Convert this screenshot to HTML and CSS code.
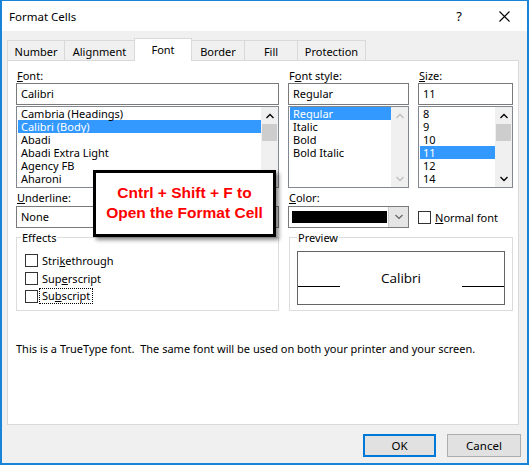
FILE: index.html
```html
<!DOCTYPE html>
<html>
<head>
<meta charset="utf-8">
<link rel="stylesheet" href="styles.css">
</head>
<body>
<div class="window">
  <div class="titlebar">
    <span class="title">Format Cells</span>
    <span class="cap help">?</span>
    <span class="cap close"><svg width="11" height="11" viewBox="0 0 11 11"><path d="M0.5 0.5L10.5 10.5M10.5 0.5L0.5 10.5" stroke="#000" stroke-width="1.1" fill="none"/></svg></span>
  </div>
  <div class="body">
    <div class="tabs">
      <div class="tab t-number">Number</div>
      <div class="tab t-align">Alignment</div>
      <div class="tab active t-font">Font</div>
      <div class="tab t-border">Border</div>
      <div class="tab t-fill">Fill</div>
      <div class="tab t-prot">Protection</div>
    </div>
    <div class="panel">
      <div class="grid">
        <div class="label c1"><u>F</u>ont:</div>
        <div class="label c2">F<u>o</u>nt style:</div>
        <div class="label c3"><u>S</u>ize:</div>

        <div class="input c1">Calibri</div>
        <div class="input c2">Regular</div>
        <div class="input c3">11</div>

        <div class="list c1">
          <div class="items">
            <div class="item">Cambria (Headings)</div>
            <div class="item sel">Calibri (Body)</div>
            <div class="item">Abadi</div>
            <div class="item">Abadi Extra Light</div>
            <div class="item">Agency FB</div>
            <div class="item">Aharoni</div>
          </div>
          <div class="scroll">
            <div class="arrow"><svg width="8" height="6" viewBox="0 0 8 6"><path d="M0.5 5L4 1.5L7.5 5" stroke="#000" stroke-width="1.3" fill="none"/></svg></div>
            <div class="thumb"></div>
            <div class="spacer"></div>
            <div class="arrow"><svg width="8" height="6" viewBox="0 0 8 6"><path d="M0.5 1L4 4.5L7.5 1" stroke="#000" stroke-width="1.3" fill="none"/></svg></div>
          </div>
        </div>
        <div class="list c2">
          <div class="items">
            <div class="item sel">Regular</div>
            <div class="item">Italic</div>
            <div class="item">Bold</div>
            <div class="item">Bold Italic</div>
          </div>
          <div class="scroll">
            <div class="arrow"><svg width="8" height="6" viewBox="0 0 8 6"><path d="M0.5 5L4 1.5L7.5 5" stroke="#bfbfbf" stroke-width="1.3" fill="none"/></svg></div>
            <div class="spacer"></div>
            <div class="arrow"><svg width="8" height="6" viewBox="0 0 8 6"><path d="M0.5 1L4 4.5L7.5 1" stroke="#bfbfbf" stroke-width="1.3" fill="none"/></svg></div>
          </div>
        </div>
        <div class="list c3">
          <div class="items">
            <div class="item">8</div>
            <div class="item">9</div>
            <div class="item">10</div>
            <div class="item sel">11</div>
            <div class="item">12</div>
            <div class="item">14</div>
          </div>
          <div class="scroll">
            <div class="arrow"><svg width="8" height="6" viewBox="0 0 8 6"><path d="M0.5 5L4 1.5L7.5 5" stroke="#000" stroke-width="1.3" fill="none"/></svg></div>
            <div class="thumb"></div>
            <div class="spacer"></div>
            <div class="arrow"><svg width="8" height="6" viewBox="0 0 8 6"><path d="M0.5 1L4 4.5L7.5 1" stroke="#000" stroke-width="1.3" fill="none"/></svg></div>
          </div>
        </div>

        <div class="label c1 lower"><u>U</u>nderline:</div>
        <div class="label c2 lower"><u>C</u>olor:</div>

        <div class="select c1">
          <span class="sel-text">None</span>
          <span class="dd"><svg width="8" height="6" viewBox="0 0 8 6"><path d="M0.5 1L4 4.5L7.5 1" stroke="#606060" stroke-width="1.1" fill="none"/></svg></span>
        </div>
        <div class="select c2">
          <span class="swatch"></span>
          <span class="dd"><svg width="8" height="6" viewBox="0 0 8 6"><path d="M0.5 1L4 4.5L7.5 1" stroke="#606060" stroke-width="1.1" fill="none"/></svg></span>
        </div>
        <div class="check c3 normal"><span class="box"></span><span><u>N</u>ormal font</span></div>

        <fieldset class="group c1 effects">
          <legend>Effects</legend>
          <div class="check"><span class="box"></span><span>Stri<u>k</u>ethrough</span></div>
          <div class="check"><span class="box"></span><span>Sup<u>e</u>rscript</span></div>
          <div class="check"><span class="box"></span><span class="focus">Su<u>b</u>script</span></div>
        </fieldset>
        <fieldset class="group preview">
          <legend>Preview</legend>
          <div class="pbox">
            <span class="pline"></span>
            <span class="ptext">Calibri</span>
            <span class="pline"></span>
          </div>
        </fieldset>
      </div>
      <p class="note">This is a TrueType font.&nbsp; The same font will be used on both your printer and your screen.</p>
    </div>
    <div class="buttons">
      <button class="btn ok">OK</button>
      <button class="btn cancel">Cancel</button>
    </div>
  </div>
  <div class="callout">Cntrl + Shift + F to<br>Open the Format Cell</div>
</div>
</body>
</html>
```

FILE: styles.css
```css
* { box-sizing: border-box; }
html, body { margin: 0; padding: 0; }
body {
  font-family: "Noto Sans", "Segoe UI", sans-serif;
  font-size: 11px;
  color: #000;
  background: #fff;
}
.window {
  position: relative;
  width: 529px;
  height: 465px;
  border: solid #1883d7;
  border-width: 1px 2px 2px 2px;
  display: flex;
  flex-direction: column;
  background: #f0f0f0;
}
.titlebar {
  height: 30px;
  flex: none;
  background: #fff;
  display: flex;
  align-items: center;
  padding-left: 7px;
  font-size: 11.5px;
}
.title { flex: 1; }
.cap {
  height: 30px;
  display: flex;
  align-items: center;
  justify-content: center;
}
.help { width: 46px; font-size: 13px; }
.close { width: 45px; }

.body {
  flex: 1;
  padding: 7px 6px 0 5px;
  display: flex;
  flex-direction: column;
}
.tabs {
  display: flex;
  align-items: flex-end;
  height: 22px;
  position: relative;
  z-index: 1;
}
.tab {
  height: 20px;
  border: 1px solid #d9d9d9;
  border-bottom: none;
  background: #f0f0f0;
  display: flex;
  align-items: center;
  justify-content: center;
  margin-left: -1px;
  padding-top: 1px;
}
.tab:first-child { margin-left: 0; }
.tab.active {
  height: 23px;
  margin-bottom: -1px;
  background: #fff;
  padding-top: 0;
  padding-bottom: 2px;
}
.t-number { width: 58px; }
.t-align { width: 71px; }
.t-font { width: 58px; }
.t-border { width: 54px; }
.t-fill { width: 54px; }
.t-prot { width: 69px; }

.panel {
  height: 365px;
  margin-right: 2px;
  background: #fff;
  border: 1px solid #d9d9d9;
  padding: 7px 6px 0 8px;
}
.grid {
  display: grid;
  grid-template-columns: 263px 9px 121px 9px 95px;
}
.c1 { grid-column: 1; }
.c2 { grid-column: 3; }
.c3 { grid-column: 5; }
.label {
  height: 15px;
  line-height: 15px;
  padding-left: 1px;
}
.label.lower { margin-top: 2px; }
.input {
  height: 22px;
  border: 1px solid #7a7a7a;
  padding-left: 4px;
  line-height: 20px;
}
.list {
  height: 82px;
  margin-top: 1px;
  border: 1px solid #828790;
  display: flex;
}
.items {
  flex: 1;
  padding: 0 0 0 1px;
  overflow: hidden;
}
.item {
  height: 13px;
  line-height: 13px;
  padding-left: 3px;
  white-space: nowrap;
}
.item.sel { background: #3399ff; color: #fff; }
.scroll {
  width: 17px;
  background: #f0f0f0;
  display: flex;
  flex-direction: column;
}
.arrow {
  height: 17px;
  display: flex;
  align-items: center;
  justify-content: center;
}
.thumb {
  height: 17px;
  margin: 0 1px;
  background: #cdcdcd;
}
.spacer { flex: 1; }

.select {
  height: 22px;
  margin-top: 1px;
  border: 1px solid #7a7a7a;
  display: flex;
  align-items: stretch;
}
.sel-text { flex: 1; padding-left: 4px; line-height: 20px; }
.swatch {
  flex: 1;
  margin: 4px 0 4px 3px;
  background: #000;
}
.dd {
  width: 20px;
  margin-left: 1px;
  background: #e5e5e5;
  border-left: 1px solid #c8c8c8;
  display: flex;
  align-items: center;
  justify-content: center;
}
.check {
  display: flex;
  align-items: center;
  height: 18px;
}
.check .box {
  width: 13px;
  height: 13px;
  border: 1px solid #333;
  background: #fff;
  margin-right: 4px;
  flex: none;
}
.normal { height: 22px; margin-top: 1px; align-self: start; }
.effects .check { margin-left: 4px; }
.focus {
  outline: 1px dotted #000;
  outline-offset: 0;
  padding: 0 2px;
  margin-left: -2px;
  line-height: 14px;
}

.group {
  margin: 2px 0 0 0;
  padding: 0 4px 0 4px;
  border: 1px solid #dcdcdc;
  height: 81px;
  min-width: 0;
}
.group legend { padding: 0 1px; line-height: 15px; }
.effects .check:first-of-type { margin-top: 6px; }
.preview {
  grid-column: 3 / 6;
  margin-left: 1px;
  padding: 0 7px;
}
.pbox {
  margin-top: 6px;
  height: 54px;
  border: 1px solid #646464;
  display: flex;
  align-items: center;
}
.pline {
  width: 42px;
  height: 1px;
  background: #000;
  margin-top: 16px;
}
.ptext {
  flex: 1;
  text-align: center;
  font-family: "Open Sans", sans-serif;
  font-size: 13.5px;
}
.note {
  margin: 30px 0 0 0;
  line-height: 16px;
  white-space: nowrap;
}
.buttons {
  display: flex;
  justify-content: flex-end;
  gap: 11px;
  margin-top: 9px;
}
.btn {
  font: inherit;
  font-size: 11.5px;
  height: 23px;
  background: #e1e1e1;
  border: 1px solid #adadad;
  padding: 0;
  color: #000;
}
.ok { width: 73px; border: 2px solid #0078d7; }
.cancel { width: 74px; }

.callout {
  position: absolute;
  left: 91px;
  top: 169px;
  width: 183px;
  height: 67px;
  border: 3px solid #000;
  background: #fff;
  box-shadow: 3px 3px 4px rgba(0,0,0,0.45);
  font-family: "Liberation Sans", Arial, sans-serif;
  font-weight: bold;
  font-size: 15.5px;
  line-height: 20px;
  color: #ff0000;
  text-align: center;
  padding-top: 10px;
  z-index: 5;
}
```
